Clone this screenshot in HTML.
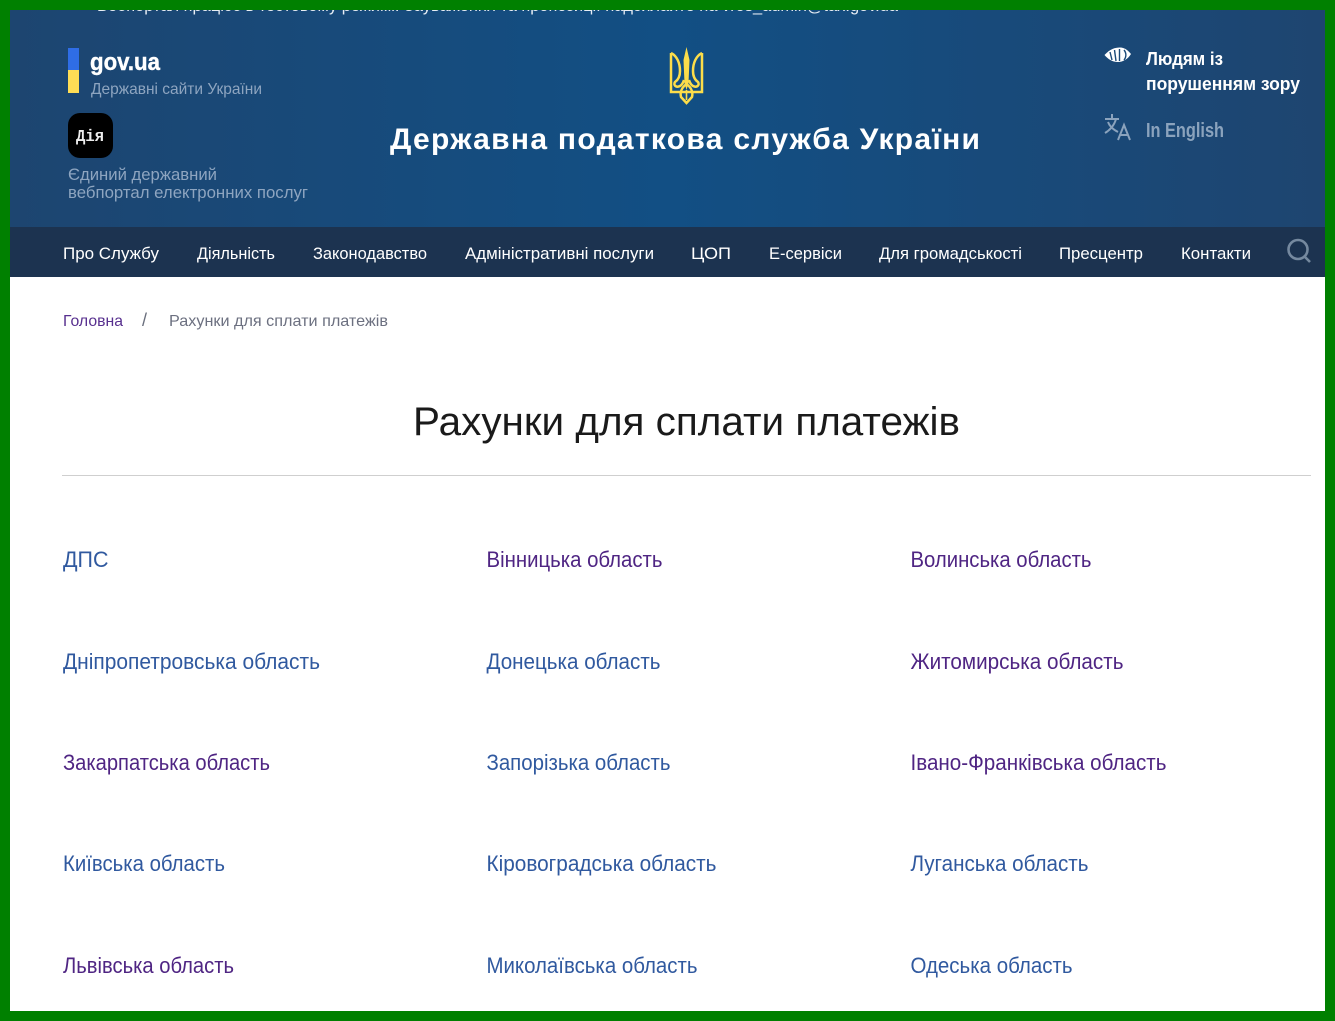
<!DOCTYPE html>
<html lang="uk">
<head>
<meta charset="utf-8">
<title>Рахунки для сплати платежів</title>
<style>
html,body{margin:0;padding:0;width:1335px;height:1021px;overflow:hidden;background:#fff}
svg{display:block;position:absolute;left:0;top:0}
text{font-family:"Liberation Sans","Noto Sans CJK SC",sans-serif}
.n{font-size:17px;fill:#fff}
.l{font-size:22px}
.b{fill:#30599f}
.p{fill:#4f2583}
</style>
</head>
<body>
<svg width="1335" height="1021" viewBox="0 0 1335 1021" xmlns="http://www.w3.org/2000/svg">
<defs>
<linearGradient id="hd" x1="0" x2="1" y1="0" y2="0">
<stop offset="0" stop-color="#1d4570"/>
<stop offset=".5" stop-color="#124f84"/>
<stop offset="1" stop-color="#1e4570"/>
</linearGradient>
</defs>
<rect x="0" y="0" width="1335" height="1021" fill="#fff"/>
<rect x="10" y="10" width="1315" height="217" fill="url(#hd)"/>
<rect x="10" y="227" width="1315" height="50" fill="#1c3350"/>

<text x="97" y="11" font-size="17" fill="#e8eef5" textLength="801" lengthAdjust="spacingAndGlyphs">Вебпортал працює в тестовому режимі. Зауваження та пропозиції надсилайте на vros_admin@tax.gov.ua</text>

<rect x="68" y="48" width="11" height="22" fill="#2f6de6"/>
<rect x="68" y="70" width="11" height="23" fill="#ffdd55"/>
<text x="90" y="70" font-size="24" font-weight="700" fill="#fff" stroke="#fff" stroke-width=".4" textLength="70" lengthAdjust="spacingAndGlyphs">gov.ua</text>
<text x="91" y="94" font-size="16" fill="#8ea5c0" textLength="171" lengthAdjust="spacingAndGlyphs">Державні сайти України</text>

<rect x="68" y="113" width="45" height="45" rx="12" fill="#000"/>
<text x="76" y="141" font-size="17" font-weight="700" style="font-family:'Liberation Mono',monospace" fill="#eee" textLength="28" lengthAdjust="spacingAndGlyphs">Дія</text>
<text x="68" y="180" font-size="17" fill="#8ea5c0" textLength="149" lengthAdjust="spacingAndGlyphs">Єдиний державний</text>
<text x="68" y="198" font-size="17" fill="#8ea5c0" textLength="240" lengthAdjust="spacingAndGlyphs">вебпортал електронних послуг</text>

<g fill="none" stroke="#fcdd4a" stroke-width="2.5" stroke-linejoin="miter">
<path d="M686.5 47 L683.5 60 L684.5 83 L686.5 90 L688.5 83 L689.5 60 Z" fill="#fcdd4a" stroke="none"/>
<path d="M671 53 V92 H702 V53"/>
<path d="M671 53 C677 56 680 63 680 71 C680 77 678 80 675 82 C673 85 676 88 680 86 C682 85 683 83 684 80"/>
<path d="M702 53 C696 56 693 63 693 71 C693 77 695 80 698 82 C700 85 697 88 693 86 C691 85 690 83 689 80"/>
<path d="M686.5 84 C681 88 680 93 681 97 L686.5 103 L692 97 C693 93 692 88 686.5 84 Z"/>
<path d="M686.5 90 V100" stroke-width="1.6"/>
</g>

<text x="390" y="149" font-size="30" font-weight="700" fill="#fff" textLength="590">Державна податкова служба України</text>

<path d="M1104.5 55 C1110 49 1115 47.5 1120 47.5 C1125 47.5 1128.5 51 1131 54 C1128 59 1123 62 1118 62 C1112 62 1108 59 1104.5 55 Z" fill="#fff"/>
<path d="M1110 52 L1112 60 M1114.5 50 L1116 61 M1119.5 49 V61 M1124 50 C1126.5 53 1126.5 57 1124 60" fill="none" stroke="#1b4a78" stroke-width="1.4"/>
<text x="1146" y="65" font-size="18" font-weight="700" fill="#fff" textLength="77" lengthAdjust="spacingAndGlyphs">Людям із</text>
<text x="1146" y="90" font-size="18" font-weight="700" fill="#fff" textLength="154" lengthAdjust="spacingAndGlyphs">порушенням зору</text>

<g fill="none" stroke="#8ba3bd" stroke-width="2">
<path d="M1105 119 H1119 M1112 114 V119 M1116 119 C1114 126 1110 130 1105 133 M1108 122 C1110 127 1114 130 1118 132"/>
<path d="M1118 140 L1124 125 L1130 140 M1120 135 H1128"/>
</g>
<text x="1146" y="137" font-size="20" font-weight="700" fill="#8ba3bd" textLength="78" lengthAdjust="spacingAndGlyphs">In English</text>

<text class="n" x="63" y="259" textLength="96" lengthAdjust="spacingAndGlyphs">Про Службу</text>
<text class="n" x="197" y="259" textLength="78" lengthAdjust="spacingAndGlyphs">Діяльність</text>
<text class="n" x="313" y="259" textLength="114" lengthAdjust="spacingAndGlyphs">Законодавство</text>
<text class="n" x="465" y="259" textLength="189" lengthAdjust="spacingAndGlyphs">Адміністративні послуги</text>
<text class="n" x="691" y="259" textLength="40" lengthAdjust="spacingAndGlyphs">ЦОП</text>
<text class="n" x="769" y="259" textLength="73" lengthAdjust="spacingAndGlyphs">Е-сервіси</text>
<text class="n" x="879" y="259" textLength="143" lengthAdjust="spacingAndGlyphs">Для громадськості</text>
<text class="n" x="1059" y="259" textLength="84" lengthAdjust="spacingAndGlyphs">Пресцентр</text>
<text class="n" x="1181" y="259" textLength="70" lengthAdjust="spacingAndGlyphs">Контакти</text>
<g fill="none" stroke="#75899f" stroke-width="2.6">
<circle cx="1298" cy="249.5" r="9.5"/>
<path d="M1304.5 256.5 L1310 262"/>
</g>

<text x="63" y="326" font-size="16" fill="#58308f" textLength="60" lengthAdjust="spacingAndGlyphs">Головна</text>
<text x="142" y="326" font-size="18" fill="#6a6f7d">/</text>
<text x="169" y="326" font-size="16" fill="#6c7080" textLength="219" lengthAdjust="spacingAndGlyphs">Рахунки для сплати платежів</text>

<text x="413" y="435" font-size="40" fill="#1a1a1a" textLength="547" lengthAdjust="spacingAndGlyphs">Рахунки для сплати платежів</text>
<rect x="62" y="475" width="1249" height="1" fill="#cfcfcf"/>

<text class="l b" x="63" y="567" textLength="45.5" lengthAdjust="spacingAndGlyphs">ДПС</text>
<text class="l p" x="486.5" y="567" textLength="176" lengthAdjust="spacingAndGlyphs">Вінницька область</text>
<text class="l p" x="910.5" y="567" textLength="181" lengthAdjust="spacingAndGlyphs">Волинська область</text>

<text class="l b" x="63" y="669" textLength="257" lengthAdjust="spacingAndGlyphs">Дніпропетровська область</text>
<text class="l b" x="486.5" y="669" textLength="174" lengthAdjust="spacingAndGlyphs">Донецька область</text>
<text class="l p" x="910.5" y="669" textLength="213" lengthAdjust="spacingAndGlyphs">Житомирська область</text>

<text class="l p" x="63" y="770" textLength="207" lengthAdjust="spacingAndGlyphs">Закарпатська область</text>
<text class="l b" x="486.5" y="770" textLength="184" lengthAdjust="spacingAndGlyphs">Запорізька область</text>
<text class="l p" x="910.5" y="770" textLength="256" lengthAdjust="spacingAndGlyphs">Івано-Франківська область</text>

<text class="l b" x="63" y="871" textLength="162" lengthAdjust="spacingAndGlyphs">Київська область</text>
<text class="l b" x="486.5" y="871" textLength="230" lengthAdjust="spacingAndGlyphs">Кіровоградська область</text>
<text class="l b" x="910.5" y="871" textLength="178" lengthAdjust="spacingAndGlyphs">Луганська область</text>

<text class="l p" x="63" y="973" textLength="171" lengthAdjust="spacingAndGlyphs">Львівська область</text>
<text class="l b" x="486.5" y="973" textLength="211" lengthAdjust="spacingAndGlyphs">Миколаївська область</text>
<text class="l b" x="910.5" y="973" textLength="162" lengthAdjust="spacingAndGlyphs">Одеська область</text>

<rect x="0" y="0" width="1335" height="10" fill="#008000"/>
<rect x="0" y="1011" width="1335" height="10" fill="#008000"/>
<rect x="0" y="0" width="10" height="1021" fill="#008000"/>
<rect x="1325" y="0" width="10" height="1021" fill="#008000"/>
</svg>
</body>
</html>
